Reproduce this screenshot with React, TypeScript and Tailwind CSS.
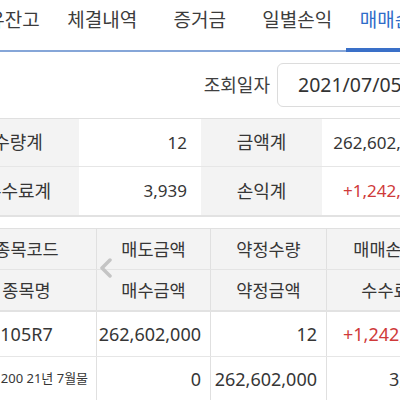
import React from "react";

const font = { fontFamily: '"Noto Sans", "Noto Sans CJK KR", sans-serif' };

function Chevron() {
  return (
    <svg width="14" height="20" viewBox="0 0 14 20" className="absolute left-[99px] top-[258px]">
      <polyline points="11,2 3,10 11,18" fill="none" stroke="#c4c4c4" strokeWidth="3.5" strokeLinecap="round" strokeLinejoin="round" />
    </svg>
  );
}

export default function App() {
  const tabs = ["보유잔고", "체결내역", "증거금", "일별손익", "매매손익"];
  return (
    <div className="relative w-[400px] h-[400px] overflow-hidden bg-white text-[#363636]" style={font}>
      <div className="ml-[-44px] w-[560px]">
        {/* Tabs */}
        <div className="flex h-[52px] border-b-2 border-[#86a6d8]">
          {tabs.map((t, i) =>
            i === 4 ? (
              <div key={t} className="w-[97.5px] shrink-0 flex justify-center pt-[6px] text-[19px] leading-[28px] text-[#2f6cc9] border-b-4 border-[#3a70c8] -mb-[2px]">
                {t}
              </div>
            ) : (
              <div key={t} className="w-[97.5px] shrink-0 flex justify-center pt-[6px] text-[19px] leading-[28px] text-[#3c3c3c]">
                {t}
              </div>
            )
          )}
        </div>
      </div>

      <div className="ml-[-43px] w-[560px]">
        {/* Date row */}
        <div className="flex items-center h-[66px]">
          <div className="w-[320px] shrink-0 text-right pr-[7px] text-[18px] text-[#404040]">조회일자</div>
          <div className="w-[180px] h-[44px] shrink-0 border border-[#dcdcdc] rounded-[6px] flex items-center pl-[20px] text-[19.5px] text-[#333]">
            2021/07/05
          </div>
        </div>

        {/* Summary */}
        <div className="grid grid-cols-[122px_122px_121px_122px] border-t border-[#e0e0e0] border-b-2 border-b-[#e2e2e2] text-[17px]">
          <div className="h-[48px] bg-[#f3f3f3] flex items-center justify-center border-b border-[#e6e6e6] text-[18px]">수량계</div>
          <div className="h-[48px] flex items-center justify-end pr-[14px] border-b border-[#e6e6e6]">12</div>
          <div className="h-[48px] bg-[#f3f3f3] flex items-center justify-center border-b border-[#e6e6e6] text-[18px]">금액계</div>
          <div className="h-[48px] flex items-center justify-end pr-[14px] border-b border-[#e6e6e6]">262,602,000</div>
          <div className="h-[48px] bg-[#f3f3f3] flex items-center justify-center text-[18px]">수수료계</div>
          <div className="h-[48px] flex items-center justify-end pr-[14px]">3,939</div>
          <div className="h-[48px] bg-[#f3f3f3] flex items-center justify-center text-[18px]">손익계</div>
          <div className="h-[48px] flex items-center justify-end pr-[14px] text-[#cf3a3a]">+1,242,000</div>
        </div>

        {/* Grid table */}
        <div className="mt-[11px] border-t border-[#e0e0e0] text-[17.5px]">
          <div className="grid grid-cols-[140px_114px_116px_117px] bg-[#f3f3f3] border-b border-[#e4e4e4]">
            <div className="h-[40px] flex items-center justify-center border-r border-[#e0e0e0]">종목코드</div>
            <div className="h-[40px] flex items-center justify-center border-r border-[#e0e0e0]">매도금액</div>
            <div className="h-[40px] flex items-center justify-center border-r border-[#e0e0e0]">약정수량</div>
            <div className="h-[40px] flex items-center justify-center">매매손익</div>
          </div>
          <div className="grid grid-cols-[140px_114px_116px_117px] bg-[#f3f3f3] border-b-2 border-[#e2e2e2]">
            <div className="h-[40px] flex items-center justify-center border-r border-[#e0e0e0]">종목명</div>
            <div className="h-[40px] flex items-center justify-center border-r border-[#e0e0e0]">매수금액</div>
            <div className="h-[40px] flex items-center justify-center border-r border-[#e0e0e0]">약정금액</div>
            <div className="h-[40px] flex items-center justify-center">수수료</div>
          </div>
          <div className="grid grid-cols-[140px_114px_116px_117px] border-b border-[#e6e6e6] text-[18px]">
            <div className="h-[44px] flex items-center justify-center border-r border-[#e0e0e0]">105R7</div>
            <div className="h-[44px] flex items-center justify-end pr-[9px] border-r border-[#e0e0e0]">262,602,000</div>
            <div className="h-[44px] flex items-center justify-end pr-[9px] border-r border-[#e0e0e0]">12</div>
            <div className="h-[44px] flex items-center justify-end pr-[9px] text-[#cf3a3a]">+1,242,000</div>
          </div>
          <div className="grid grid-cols-[140px_114px_116px_117px] border-b border-[#e6e6e6] text-[18px]">
            <div className="h-[44px] flex items-center justify-center border-r border-[#e0e0e0] text-[13px] whitespace-nowrap overflow-hidden">코스피200 21년 7월물</div>
            <div className="h-[44px] flex items-center justify-end pr-[9px] border-r border-[#e0e0e0]">0</div>
            <div className="h-[44px] flex items-center justify-end pr-[9px] border-r border-[#e0e0e0]">262,602,000</div>
            <div className="h-[44px] flex items-center justify-end pr-[9px]">3,939</div>
          </div>
        </div>
      </div>
      <Chevron />
    </div>
  );
}
